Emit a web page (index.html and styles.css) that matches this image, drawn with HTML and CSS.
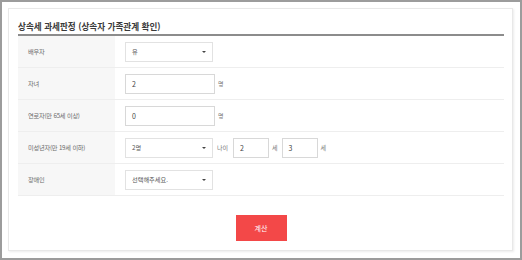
FILE: index.html
```html
<!DOCTYPE html>
<html lang="ko">
<head>
    <meta charset="UTF-8">
    <meta name="viewport" content="width=device-width, initial-scale=1.0">
    <title>상속세 과세판정</title>
    <link rel="stylesheet" href="styles.css">
</head>
<body>
    <div class="frame">
        <div class="card">
            <h2 class="title">상속세 과세판정 (상속자 가족관계 확인)</h2>
            <div class="row">
                <div class="label">배우자</div>
                <div class="field">
                    <div class="select">유<span class="caret"></span></div>
                </div>
            </div>
            <div class="row">
                <div class="label">자녀</div>
                <div class="field">
                    <div class="input">2</div>
                    <span class="unit">명</span>
                </div>
            </div>
            <div class="row">
                <div class="label">연로자(만 65세 이상)</div>
                <div class="field">
                    <div class="input">0</div>
                    <span class="unit">명</span>
                </div>
            </div>
            <div class="row">
                <div class="label">미성년자(만 19세 이하)</div>
                <div class="field">
                    <div class="select">2명<span class="caret"></span></div>
                    <span class="unit age">나이</span>
                    <div class="input small">2</div>
                    <span class="unit">세</span>
                    <div class="input small">3</div>
                    <span class="unit">세</span>
                </div>
            </div>
            <div class="row">
                <div class="label">장애인</div>
                <div class="field">
                    <div class="select">선택해주세요.<span class="caret"></span></div>
                </div>
            </div>
            <div class="actions">
                <button class="btn">계산</button>
            </div>
        </div>
    </div>
</body>
</html>
```

FILE: styles.css
```css
    body {
        margin: 0;
        padding: 0;
        background-color: white;
        font-family: "Noto Sans CJK KR", "Noto Sans", sans-serif;
        color: #555;
    }
    .frame {
        width: 522px;
        height: 260px;
        box-sizing: border-box;
        border: 2px solid #9c9c9c;
        padding: 6px 7px 6px 6px;
    }
    .card {
        height: 243px;
        box-sizing: border-box;
        border: 1px solid #e8e8e8;
        box-shadow: 1px 1px 2px rgba(0, 0, 0, 0.08);
        padding: 0 8px 0 9px;
    }
    .title {
        margin: 0;
        padding-top: 9px;
        height: 16px;
        line-height: 16px;
        font-size: 8.6px;
        font-weight: bold;
        color: #3a3a3a;
        border-bottom: 2px solid #8c8c8c;
    }
    .row {
        display: flex;
        height: 31px;
        border-bottom: 1px solid #eeeeee;
    }
    .label {
        width: 87px;
        padding-left: 10px;
        background-color: #f7f7f7;
        display: flex;
        align-items: center;
        font-size: 6.2px;
        letter-spacing: -0.2px;
        color: #6a6a6a;
    }
    .field {
        display: flex;
        align-items: center;
        padding-left: 10px;
        font-size: 6.2px;
    }
    .select {
        width: 88px;
        height: 20px;
        box-sizing: border-box;
        border: 1px solid #e2e2e2;
        padding: 0 6px;
        display: flex;
        align-items: center;
        justify-content: space-between;
        color: #555;
    }
    .caret {
        width: 0;
        height: 0;
        border-left: 2px solid transparent;
        border-right: 2px solid transparent;
        border-top: 2px solid #444;
    }
    .input {
        width: 90px;
        height: 20px;
        box-sizing: border-box;
        border: 1px solid #d8d8d8;
        padding-left: 6px;
        display: flex;
        align-items: center;
        color: #444;
        font-size: 7px;
    }
    .input.small {
        width: 36px;
    }
    .unit {
        margin: 0 4px 0 3px;
        color: #777;
        font-size: 6px;
    }
    .unit.age {
        margin-left: 4px;
        margin-right: 5px;
    }
    .actions {
        display: flex;
        justify-content: center;
        padding-top: 19px;
    }
    .btn {
        width: 51px;
        height: 26px;
        border: none;
        background-color: #f34848;
        color: white;
        font-family: "Noto Sans CJK KR", sans-serif;
        font-size: 7px;
        padding: 0;
    }
```
